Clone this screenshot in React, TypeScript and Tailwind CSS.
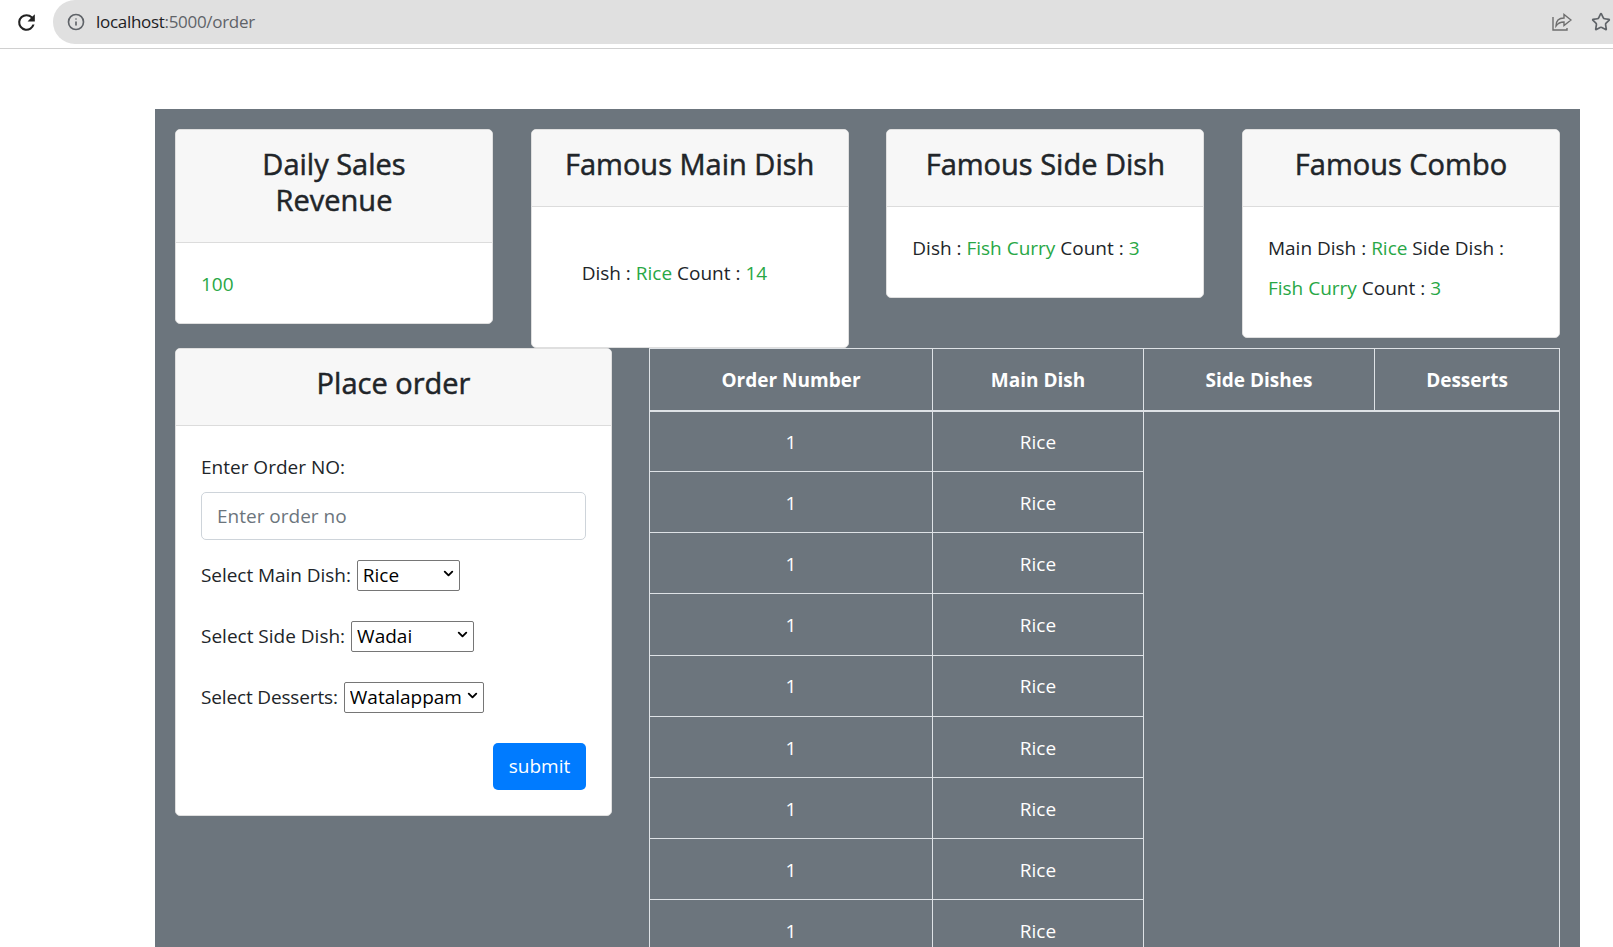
import React from 'react';
import { ChevronDown, Info, Star } from 'lucide-react';

const orders = Array.from({ length: 9 }, () => ({ no: 1, main: 'Rice' }));

const Green: React.FC<{ children: React.ReactNode }> = ({ children }) => (
  <span className="text-[#28a745]">{children}</span>
);

const Card: React.FC<{ title: string; className?: string; bodyClass?: string; children: React.ReactNode }> = ({
  title,
  className = '',
  bodyClass = '',
  children,
}) => (
  <div className={`bg-white rounded-[5px] border border-[#dfdfdf] overflow-hidden ${className}`}>
    <div className="bg-[#f7f7f7] border-b border-[#dcdcdc] px-[30px] pt-[16px] pb-[24px] text-center text-[29px] leading-[36px] text-[#212529] [-webkit-text-stroke:0.5px_#212529]">
      {title}
    </div>
    <div className={bodyClass}>{children}</div>
  </div>
);

const SelectRow: React.FC<{ label: string; value: string; width: string; labelClass?: string }> = ({
  label,
  value,
  width,
  labelClass = '',
}) => (
  <div className="flex items-center gap-[6px] h-[30px]">
    <span className={labelClass}>{label}</span>
    <div className={`relative h-[31px] ${width}`}>
      <select
        defaultValue={value}
        className="w-full h-full appearance-none border border-[#767676] rounded-[2px] bg-white text-[19px] text-black pl-[5px]"
      >
        <option>{value}</option>
      </select>
      <ChevronDown size={15} strokeWidth={3} className="absolute right-[4px] top-[6px] text-black" />
    </div>
  </div>
);

export default function App() {
  return (
    <div className="h-[947px] overflow-hidden bg-white font-['Open_Sans',sans-serif] text-[19px] text-[#212529]">
      {/* browser toolbar */}
      <div className="h-[49px] border-b border-[#d0d0d0] flex items-start">
        <div className="w-[52px] h-[44px] flex items-center justify-center">
          <svg width="25" height="25" viewBox="0 0 24 24" className="text-[#222]" fill="currentColor">
            <path d="M17.65 6.35A7.96 7.96 0 0 0 12 4a8 8 0 1 0 7.73 10h-2.08A6 6 0 1 1 12 6c1.66 0 3.14.69 4.22 1.78L13 11h7V4l-2.35 2.35z" />
          </svg>
        </div>
        <div className="flex-1 h-[44px] ml-[1px] bg-[#e0e0e0] rounded-l-[22px] flex items-center pl-[14px]">
          <Info size={18} className="text-[#5f6368]" strokeWidth={2.2} />
          <span className="ml-[11px] text-[17px] text-[#5f6368] tracking-[-0.3px]">
            <span className="text-[#202124]">localhost</span>:5000/order
          </span>
          <div className="ml-auto flex items-center gap-[19px] pr-[2px]">
            <svg width="20" height="18" viewBox="0 0 20 18" fill="none" stroke="#6e6e6e" strokeWidth="1.4">
              <path d="M1 4v13h14v-2" />
              <path d="M4 13c0-5 3-8 8-8V1.5l7 5.5-7 5.5V9c-4 0-6 1-8 4z" />
            </svg>
            <Star size={20} className="text-[#5f6368]" strokeWidth={2} />
          </div>
        </div>
      </div>

      {/* dashboard */}
      <div className="mt-[60px] ml-[155px] w-[1425px] bg-[#6c757d] px-[20px] pt-[20px] h-[900px]">
        <div className="grid grid-cols-4 gap-x-[37.6px] items-start h-[219px]">
          <Card title="Daily Sales Revenue" bodyClass="h-[80px] px-[25px] pt-[2px] flex items-center">
            <Green>100</Green>
          </Card>
          <Card title="Famous Main Dish" bodyClass="h-[140px] pl-[50px] pb-[7px] flex items-center">
            <p>
              Dish : <Green>Rice</Green> Count : <Green>14</Green>
            </p>
          </Card>
          <Card title="Famous Side Dish" bodyClass="h-[90px] px-[25px] pb-[8px] flex items-center">
            <p>
              Dish : <Green>Fish Curry</Green> Count : <Green>3</Green>
            </p>
          </Card>
          <Card title="Famous Combo" bodyClass="h-[130px] px-[25px] pb-[8px] flex items-center leading-[40px]">
            <p>
              Main Dish : <Green>Rice</Green> Side Dish : <Green>Fish Curry</Green> Count : <Green>3</Green>
            </p>
          </Card>
        </div>

        <div className="flex items-start gap-[37px]">
          <Card title="Place order" className="w-[437px] shrink-0" bodyClass="px-[25px] pt-[27px] pb-[25px]">
            <div className="leading-[28px]">Enter Order NO:</div>
            <div className="mt-[11px] h-[48px] border border-[#ced4da] rounded-[5px] flex items-center px-[15px] pt-[1px] text-[#6c757d]">
              <input
                placeholder="Enter order no"
                className="w-full outline-none bg-transparent placeholder:text-[#6c757d]"
              />
            </div>
            <div className="mt-[20px] flex flex-col gap-[31px]">
              <SelectRow
                label="Select Main Dish:"
                value="Rice"
                width="w-[103px]"
                labelClass="tracking-[-0.05px]"
              />
              <SelectRow label="Select Side Dish:" value="Wadai" width="w-[123px]" />
              <SelectRow
                label="Select Desserts:"
                value="Watalappam"
                width="w-[140px]"
                labelClass="tracking-[-0.15px]"
              />
            </div>
            <div className="mt-[31px] flex justify-end">
              <button className="w-[93px] h-[47px] rounded-[5px] bg-[#007bff] text-white">submit</button>
            </div>
          </Card>

          <table className="flex-1 border-collapse border border-[#dee2e6] text-white text-center table-fixed">
            <thead>
              <tr className="h-[62px] font-bold">
                <th className="w-[283px] border border-[#dee2e6] border-b-2 pt-[2px]">Order Number</th>
                <th className="w-[211px] border border-[#dee2e6] border-b-2 pt-[2px]">Main Dish</th>
                <th className="w-[231px] border border-[#dee2e6] border-b-2 pt-[2px]">Side Dishes</th>
                <th className="border border-[#dee2e6] border-b-2 pt-[2px]">Desserts</th>
              </tr>
            </thead>
            <tbody>
              {orders.map((o, i) => (
                <tr key={i} className="h-[61.15px]">
                  <td className="border border-[#dee2e6] pt-[2px]">{o.no}</td>
                  <td className="border border-[#dee2e6] pt-[2px]">{o.main}</td>
                </tr>
              ))}
            </tbody>
          </table>
        </div>
      </div>
    </div>
  );
}
